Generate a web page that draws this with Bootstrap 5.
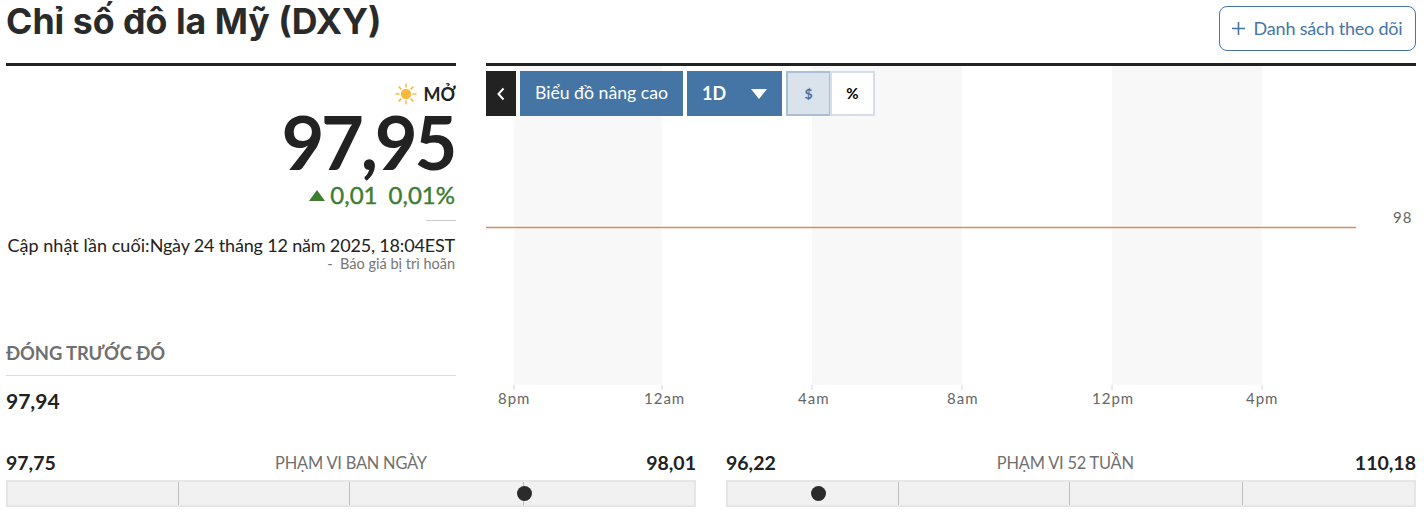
<!DOCTYPE html>
<html lang="vi">
<head>
  <meta charset="UTF-8" />
  <title>Chỉ số đô la Mỹ (DXY)</title>
  <meta name="viewport" content="width=device-width, initial-scale=1.0">
  <link href="https://cdn.jsdelivr.net/npm/bootstrap@5.3.3/dist/css/bootstrap.min.css" rel="stylesheet">
  <style>
    body {
      font-family: Lato, "Noto Sans", sans-serif;
      color: #222;
      background: #fff;
      overflow: hidden;
    }
    .page-wrap { width: 1410px; margin-left: 6px; }
    .head-row { height: 63px; }
    .page-title {
      font-family: Inter, "Noto Sans", sans-serif;
      font-size: 35.7px;
      font-weight: 700;
      line-height: 42px;
      margin: 0;
      color: #2a2a2a;
    }
    .watch-btn {
      margin-top: 6px;
      width: 197px;
      height: 45px;
      border: 1px solid #4575a5;
      border-radius: 8px;
      color: #4575a5;
      background: #fff;
      font-size: 18px;
      padding: 0 2px 0 0;
      letter-spacing: -.2px;
    }
    .quote-col { width: 450px; flex: none; }
    .chart-col { width: 930px; flex: none; }
    .top-rule { border-top: 3px solid #222; }
    .open-tag { font-size: 18px; font-weight: 700; line-height: 20px; margin-top: 16px; gap: 6px; }
    .big-price { font-size: 74px; font-weight: 700; line-height: 70px; margin-top: 1px; letter-spacing: -3.3px; padding-right: 2px; }
    .change-line { color: #3e7d2f; font-size: 24px; font-weight: 400; -webkit-text-stroke: .4px #3e7d2f; line-height: 30px; margin-top: 3px; padding-right: 1px; }
    .change-pct { margin-left: 11px; }
    .up-tri { width: 0; height: 0; border-left: 8px solid transparent; border-right: 8px solid transparent; border-bottom: 11px solid #3e7d2f; margin-right: 5px; }
    .short-rule { width: 30px; border-top: 1px solid #ccc; margin: 10px 0 0 auto; }
    .update-line { font-size: 18px; line-height: 24px; margin-top: 12px; white-space: nowrap; padding-right: 1px; }
    .update-when { letter-spacing: -.17px; }
    .update-lead { letter-spacing: .05px; }
    .delay-line { font-size: 14.5px; line-height: 18px; color: #767676; margin-top: -2px; padding-right: 1px; }
    .prev-label { font-size: 18.4px; font-weight: 700; color: #6f6f6f; line-height: 24px; margin-top: 68px; padding-bottom: 10px; border-bottom: 1px solid #ddd; letter-spacing: -.1px; }
    .prev-value { font-size: 21px; font-weight: 700; line-height: 24px; margin-top: 13px; }
    .chart-box { position: relative; height: 371px; }
    .chart-box svg { display: block; }
    .chart-label { font-family: Lato, sans-serif; font-size: 15px; fill: #666; letter-spacing: 1px; }
    .chart-tools { position: absolute; left: 0; top: 5px; height: 45px; }
    .tool-back { width: 30px; height: 45px; background: #222; color: #fff; border: 0; padding: 0; }
    .tool-blue { height: 45px; background: #4575a5; color: #fff; border: 0; margin-left: 4px; font-size: 17.7px; padding: 0; }
    .tool-adv { width: 163px; }
    .tool-period { width: 95px; font-size: 18px; font-weight: 700; padding: 0 15px; }
    .period-caret { width: 0; height: 0; border-left: 8px solid transparent; border-right: 8px solid transparent; border-top: 10px solid #fff; }
    .tool-toggle { width: 45px; height: 45px; border: 2px solid #d3deea; background: #fff; color: #000; font-size: 15px; font-weight: 700; padding: 0; }
    .tool-dollar { margin-left: 4px; background: #dae3ec; border-color: #a9bfd6; color: #4575a5; font-size: 14px; }
    .tool-pct { margin-left: -1px; }
    .range-row { margin-top: 14px; }
    .range-col { width: 690px; flex: none; }
    .range-nums { line-height: 24px; height: 24px; }
    .range-nums b { font-size: 19.5px; font-weight: 700; }
    .range-nums span { font-size: 16.4px; color: #6f6f6f; letter-spacing: -.2px; }
    .range-bar { position: relative; height: 27px; margin-top: 5px; border: 2px solid #e6e6e6; background: #f1f1f1; }
    .bar-tick { position: absolute; top: 0; bottom: 0; width: 1px; background: #bdbdbd; }
    .bar-dot { position: absolute; top: 4px; width: 15px; height: 15px; border-radius: 50%; background: #2b2b2b; }
  </style>
</head>
<body>
  <div class="page-wrap">
    <div class="head-row d-flex justify-content-between align-items-start">
      <h1 class="page-title">Chỉ số đô la Mỹ (DXY)</h1>
      <button class="watch-btn d-flex align-items-center justify-content-center gap-2">
        <svg width="15" height="15" viewBox="0 0 15 15"><path d="M7.5 1v13M1 7.5h13" stroke="#4575a5" stroke-width="1.6" fill="none"/></svg>
        Danh sách theo dõi
      </button>
    </div>

    <div class="d-flex justify-content-between">
      <div class="quote-col top-rule text-end">
        <div class="open-tag d-flex justify-content-end align-items-center">
          <svg width="24" height="24" viewBox="0 0 24 24">
            <circle cx="12" cy="12" r="5.2" fill="#f9b93f"/>
            <path d="M12 1.5v4M12 18.5v4M1.5 12h4M18.5 12h4M4.6 4.6l2.8 2.8M16.6 16.6l2.8 2.8M4.6 19.4l2.8-2.8M16.6 7.4l2.8-2.8" stroke="#f9b93f" stroke-width="1.5" fill="none"/>
          </svg>
          <span>MỞ</span>
        </div>
        <div class="big-price">97,95</div>
        <div class="change-line d-flex justify-content-end align-items-center">
          <span class="up-tri"></span><span>0,01</span><span class="change-pct">0,01%</span>
        </div>
        <div class="short-rule"></div>
        <div class="update-line"><span class="update-lead">Cập nhật lần cuối:</span><span class="update-when">Ngày 24 tháng 12 năm 2025, 18:04EST</span></div>
        <div class="delay-line">-&nbsp; Báo giá bị trì hoãn</div>
        <div class="prev-label text-start">ĐÓNG TRƯỚC ĐÓ</div>
        <div class="prev-value text-start">97,94</div>
      </div>

      <div class="chart-col top-rule">
        <div class="chart-box">
          <svg width="930" height="371" viewBox="0 0 930 371">
            <rect x="28" y="0" width="148" height="319" fill="#f8f8f8"/>
            <rect x="326" y="0" width="150" height="319" fill="#f8f8f8"/>
            <rect x="626" y="0" width="150" height="319" fill="#f8f8f8"/>
            <path d="M0 161.5H870" stroke="#d98a5e" stroke-width="1.5"/>
            <path d="M28 319v5M176 319v5M326 319v5M476 319v5M626 319v5M776 319v5" stroke="#c7d6e6"/>
            <text class="chart-label" x="907" y="157">98</text>
            <text class="chart-label" x="12" y="338">8pm</text>
            <text class="chart-label" x="158" y="338">12am</text>
            <text class="chart-label" x="312" y="338">4am</text>
            <text class="chart-label" x="461" y="338">8am</text>
            <text class="chart-label" x="606" y="338">12pm</text>
            <text class="chart-label" x="760" y="338">4pm</text>
          </svg>
          <div class="chart-tools d-flex">
            <button class="tool-back d-flex align-items-center justify-content-center" aria-label="Thu gọn">
              <svg width="10" height="14" viewBox="0 0 10 14"><path d="M7.5 1.5 2.5 7l5 5.5" stroke="#fff" stroke-width="2" fill="none"/></svg>
            </button>
            <button class="tool-blue tool-adv">Biểu đồ nâng cao</button>
            <button class="tool-blue tool-period d-flex align-items-center justify-content-between">1D<span class="period-caret"></span></button>
            <button class="tool-toggle tool-dollar">$</button>
            <button class="tool-toggle tool-pct">%</button>
          </div>
        </div>
      </div>
    </div>

    <div class="range-row d-flex justify-content-between">
      <div class="range-col">
        <div class="range-nums d-flex justify-content-between align-items-center"><b>97,75</b><span>PHẠM VI BAN NGÀY</span><b>98,01</b></div>
        <div class="range-bar">
          <i class="bar-tick" style="left:170px"></i>
          <i class="bar-tick" style="left:341px"></i>
          <i class="bar-tick" style="left:515px"></i>
          <i class="bar-dot" style="left:509px"></i>
        </div>
      </div>
      <div class="range-col">
        <div class="range-nums d-flex justify-content-between align-items-center"><b>96,22</b><span>PHẠM VI 52 TUẦN</span><b>110,18</b></div>
        <div class="range-bar">
          <i class="bar-tick" style="left:170px"></i>
          <i class="bar-tick" style="left:341px"></i>
          <i class="bar-tick" style="left:514px"></i>
          <i class="bar-dot" style="left:83px"></i>
        </div>
      </div>
    </div>
  </div>
  <script src="https://cdn.jsdelivr.net/npm/bootstrap@5.3.3/dist/js/bootstrap.bundle.min.js"></script>
</body>
</html>
